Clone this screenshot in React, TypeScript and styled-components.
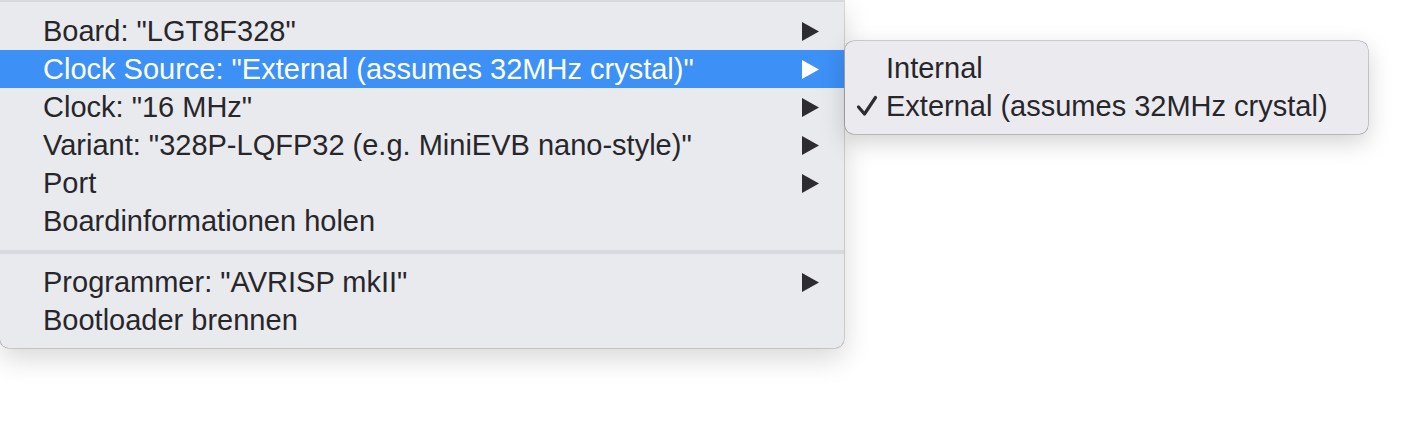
import styled, { createGlobalStyle } from 'styled-components';

const GlobalStyle = createGlobalStyle`
  body {
    margin: 0;
    background: #ffffff;
    font-family: 'Liberation Sans', Arial, sans-serif;
  }
`;

type Item = {
  label: string;
  submenu?: boolean;
  active?: boolean;
};

const toolsItems: Item[][] = [
  [
    { label: 'Board: "LGT8F328"', submenu: true },
    { label: 'Clock Source: "External (assumes 32MHz crystal)"', submenu: true, active: true },
    { label: 'Clock: "16 MHz"', submenu: true },
    { label: 'Variant: "328P-LQFP32 (e.g. MiniEVB nano-style)"', submenu: true },
    { label: 'Port', submenu: true },
    { label: 'Boardinformationen holen' },
  ],
  [
    { label: 'Programmer: "AVRISP mkII"', submenu: true },
    { label: 'Bootloader brennen' },
  ],
];

const clockSources = [
  { label: 'Internal', checked: false },
  { label: 'External (assumes 32MHz crystal)', checked: true },
];

const Arrow = ({ light }: { light?: boolean }) => (
  <svg width="18" height="19" viewBox="0 0 18 19">
    <polygon points="0,0 17,9.5 0,19" fill={light ? '#ffffff' : '#2c2c31'} />
  </svg>
);

const Check = () => (
  <svg width="22" height="22" viewBox="0 0 22 22">
    <polyline
      points="2.5,12 8.5,19 19.5,2.5"
      fill="none"
      stroke="#2c2c31"
      strokeWidth="3.2"
      strokeLinecap="round"
      strokeLinejoin="round"
    />
  </svg>
);

const App = () => {
  return (
    <>
      <GlobalStyle />
      <Page>
        <Menu>
          <TopEdge />
          {toolsItems.map((group, gi) => (
            <Group key={gi} $first={gi === 0}>
              {gi > 0 && <Separator />}
              {group.map(item => (
                <Row key={item.label} $active={item.active}>
                  <Label>{item.label}</Label>
                  {item.submenu && <Arrow light={item.active} />}
                  {item.active && (
                    <SubMenu>
                      {clockSources.map(src => (
                        <SubRow key={src.label}>
                          <CheckSlot>{src.checked && <Check />}</CheckSlot>
                          <Label>{src.label}</Label>
                        </SubRow>
                      ))}
                    </SubMenu>
                  )}
                </Row>
              ))}
            </Group>
          ))}
        </Menu>
      </Page>
    </>
  );
};

export default App;

const Page = styled.div`
  width: 1408px;
  height: 430px;
  overflow: hidden;
  display: flex;
  align-items: flex-start;
`;

const Menu = styled.div`
  width: 844px;
  background: #e9eaee;
  border-radius: 0 0 9px 9px;
  box-shadow: 0 0 0 0.5px rgba(0, 0, 0, 0.28), 0 10px 28px rgba(0, 0, 0, 0.16);
  padding-bottom: 9px;
  color: #27272b;
`;

const TopEdge = styled.div`
  height: 2px;
  background: #d9dadf;
`;

const Group = styled.div<{ $first?: boolean }>`
  padding-top: ${p => (p.$first ? '10px' : '0')};
`;

const Separator = styled.div`
  height: 4px;
  background: #d7d9de;
  margin: 10px 0 9px;
`;

const Row = styled.div<{ $active?: boolean }>`
  position: relative;
  height: 38px;
  display: flex;
  align-items: center;
  justify-content: space-between;
  padding: 0 24px 0 43px;
  font-size: 29px;
  background: ${p => (p.$active ? '#3d90f6' : 'transparent')};
  color: ${p => (p.$active ? '#ffffff' : 'inherit')};
`;

const Label = styled.span`
  white-space: nowrap;
  line-height: 1;
`;

const SubMenu = styled.div`
  position: absolute;
  top: -9px;
  left: calc(100% + 1px);
  width: 523px;
  padding: 8px 0 9px;
  background: #ebebef;
  border-radius: 9px;
  box-shadow: 0 0 0 0.5px rgba(0, 0, 0, 0.35), 0 8px 24px rgba(0, 0, 0, 0.18);
  color: #27272b;
  z-index: 2;
`;

const SubRow = styled.div`
  height: 38px;
  display: flex;
  align-items: center;
  font-size: 29px;
`;

const CheckSlot = styled.div`
  width: 41px;
  display: flex;
  justify-content: flex-end;
  padding-right: 8px;
  box-sizing: content-box;
  margin-left: -8px;
`;
